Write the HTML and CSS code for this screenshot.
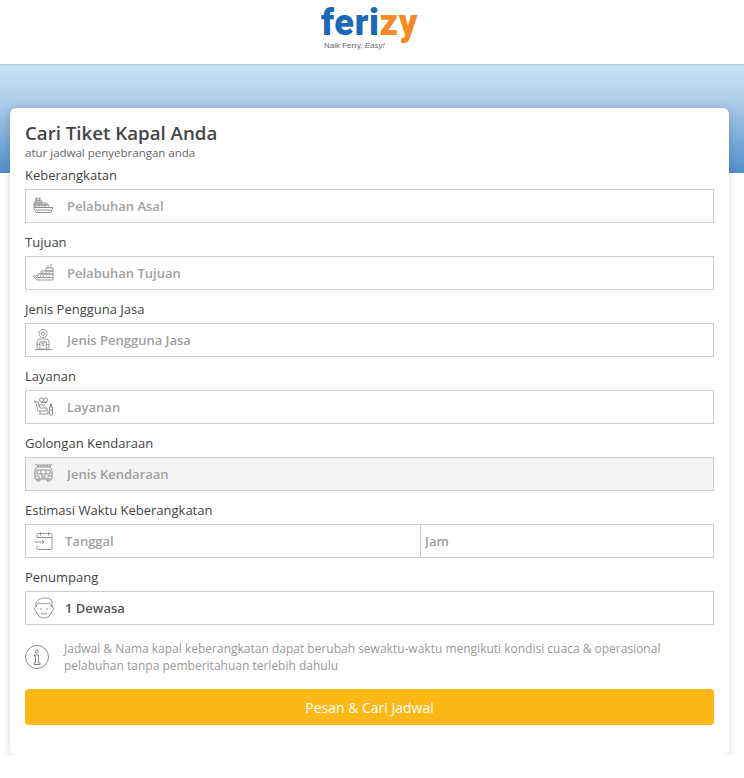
FILE: index.html
```html
<!DOCTYPE html>
<html>
  <head>
    <title>Ferizy - Cari Tiket Kapal</title>
    <link rel="stylesheet" href="styles.css">
  </head>
  <body>
    <header class="topbar">
      <div class="logo">
        <div class="logo-word"><span class="blue">feri</span><span class="orange">zy</span></div>
        <div class="logo-tag">Naik Ferry, <em>Easy!</em></div>
      </div>
    </header>
    <div class="hero"></div>

    <main class="card">
      <h1>Cari Tiket Kapal Anda</h1>
      <p class="sub">atur jadwal penyebrangan anda</p>

      <div class="field">
        <label>Keberangkatan</label>
        <div class="box">
          <svg class="icon" viewBox="0 0 22 22"><path d="M3 3h1v3H3zM6 3h1v3H6zM2 6h7v2H2zM1 8h13v2H1zM1 10h15v2.500H1zM0.500 12.500H20l-2.500 5H3zM3 15h15M3 9v1M6 9v1M9 9v1M12 9v1M3 11v1M6 11v1M9 11v1M12 11v1"/></svg>
          <input type="text" placeholder="Pelabuhan Asal">
        </div>
      </div>

      <div class="field">
        <label>Tujuan</label>
        <div class="box">
          <svg class="icon" viewBox="0 0 22 22"><path d="M15 3v3M18 2v4M13 6h7v3h-7zM8 9h12v3H8zM5 12h15v6H4l-4-4h5zM3 15.500h17M10 10v1M13 10v1M16 10v1M7 14h1M10 14h1M13 14h1M16 14h1"/></svg>
          <input type="text" placeholder="Pelabuhan Tujuan">
        </div>
      </div>

      <div class="field">
        <label>Jenis Pengguna Jasa</label>
        <div class="box">
          <svg class="icon" viewBox="0 0 22 24"><circle cx="10" cy="5" r="4.500"/><circle cx="10" cy="5" r="2"/><path d="M5 11h10l1.500 3v8h-13v-8zM6.500 14h7v8M6.500 14v8M9 14v4h2v-4M3.500 17h3M13.500 17h3M1 22.500h19"/></svg>
          <input type="text" placeholder="Jenis Pengguna Jasa">
        </div>
      </div>

      <div class="field">
        <label>Layanan</label>
        <div class="box">
          <svg class="icon" viewBox="0 0 22 22"><circle cx="8.500" cy="4" r="2"/><circle cx="12.500" cy="4" r="2"/><path d="M1 5l4 1 2 6h7v3H5l-2-8zM5 9h7M6 18h9v-3M7 15v3M16.500 11h3v8h-3zM17.500 11V8h1v3M17 14h2M8 6.500h6"/></svg>
          <input type="text" placeholder="Layanan">
        </div>
      </div>

      <div class="field">
        <label>Golongan Kendaraan</label>
        <div class="box disabled">
          <svg class="icon" viewBox="0 0 22 22"><path d="M4 4h13l2 3v9H2V7zM5 2v2M8 2v2M11 2v2M14 2v2M17 2v2M2 2h17M4 7h13v4H4zM8 7v4M13 7v4M1 10h1M19 10h1M2 13h4v3M19 13h-4v3M8 13h5M8 15h5M4 16v2h3v-2M14 16v2h3v-2"/></svg>
          <input type="text" placeholder="Jenis Kendaraan" disabled>
        </div>
      </div>

      <div class="field">
        <label>Estimasi Waktu Keberangkatan</label>
        <div class="box split">
          <div class="split-left">
            <svg class="icon small" viewBox="0 0 20 20"><path d="M3 7.500V3.500a1 1 0 0 1 1-1h13a1 1 0 0 1 1 1v14a1 1 0 0 1-1 1H4a1 1 0 0 1-1-1v-3M3 6.500h15M6.500 1v3.500M14.500 1v3.500M0.500 11h9.500M8 9l2 2-2 2"/></svg>
            <input type="text" placeholder="Tanggal">
          </div>
          <div class="split-right">
            <input type="text" placeholder="Jam">
          </div>
        </div>
      </div>

      <div class="field">
        <label>Penumpang</label>
        <div class="box">
          <svg class="icon face" viewBox="0 0 22 22"><path d="M3 10c-2 0-2 4 0 4 1 4 4 7 8 7s7-3 8-7c2 0 2-4 0-4"/><path d="M3 10V6c1-3 5-5 9-5 3 0 6 1 7 3v6c-1-2-2-4-3-4-3 1-7 1-10 0-2 0-2 2-3 4z"/><path d="M7 12h2M13 12h2M8 16c2 1.500 4 1.500 6 0"/></svg>
          <input class="filled" type="text" value="1 Dewasa">
        </div>
      </div>

      <div class="note">
        <svg class="note-icon" viewBox="0 0 24 24"><circle cx="12" cy="12" r="11.500"/><circle cx="12" cy="6.500" r="1.500"/><path d="M9.500 10h4v8H15v1.500H9V18h1.500v-6.500h-1z"/></svg>
        <p>Jadwal &amp; Nama kapal keberangkatan dapat berubah sewaktu-waktu mengikuti kondisi cuaca &amp; operasional pelabuhan tanpa pemberitahuan terlebih dahulu</p>
      </div>

      <button class="submit">Pesan &amp; Cari Jadwal</button>
    </main>
  </body>
</html>
```

FILE: styles.css
```css
* {
  box-sizing: border-box;
}

body {
  margin: 0;
  background: #fff;
  font-family: "Open Sans", sans-serif;
  font-size: 13px;
  color: #444;
}

.topbar {
  height: 64px;
  display: flex;
  justify-content: center;
  padding-top: 5px;
  background: #fff;
}

.logo {
  width: 100px;
  margin-left: -2px;
}

.logo-word {
  font-family: Roboto, sans-serif;
  font-size: 36px;
  font-weight: 900;
  line-height: 36px;
  letter-spacing: 0.7px;
  white-space: nowrap;
}

.blue {
  color: #1b69b4;
}

.orange {
  color: #f58a25;
}

.logo-tag {
  padding-left: 3px;
  font-family: "Liberation Sans", sans-serif;
  font-size: 8px;
  line-height: 10px;
  color: #666;
}

.hero {
  height: 109px;
  background: linear-gradient(#cbe4f5 0, #a6c8e6 40%, #4f8fcb 100%);
  box-shadow: inset 0 2px 2px -1px rgba(0, 0, 0, 0.12);
}

.card {
  width: 719px;
  margin: -65px 0 0 10px;
  padding: 14px 15px 30px;
  position: relative;
  background: #fff;
  border-radius: 6px;
  box-shadow: 0 1px 8px rgba(0, 0, 0, 0.16);
}

h1 {
  margin: 0;
  font-size: 18.7px;
  font-weight: 600;
  line-height: 22px;
  color: #444;
}

.sub {
  margin: 1px 0 5px;
  font-size: 11.5px;
  line-height: 16px;
  color: #666;
}

.field {
  margin-bottom: 10px;
}

label {
  display: block;
  margin-bottom: 5px;
  font-size: 13px;
  line-height: 18px;
  color: #444;
}

.box {
  height: 34px;
  display: flex;
  align-items: center;
  padding-left: 7px;
  background: #fff;
  border: 1px solid #ccc;
}

.box.disabled {
  background: #f4f4f4;
}

.icon {
  width: 22px;
  height: 22px;
  flex: none;
  margin-right: 12px;
  fill: none;
  stroke: #8a8a8a;
  stroke-width: 0.9;
}

.icon.small {
  width: 20px;
  height: 20px;
  margin-right: 11px;
}

.icon.face {
  margin-right: 10px;
}

input {
  flex: 1;
  min-width: 0;
  height: 100%;
  padding: 0;
  border: none;
  outline: none;
  background: transparent;
  font-family: "Open Sans", sans-serif;
  font-size: 13px;
  font-weight: 600;
}

input::placeholder {
  color: #a0a0a0;
  opacity: 1;
}

.filled {
  color: #555;
}

.box.split {
  padding-left: 0;
}

.split-left {
  width: 395px;
  height: 100%;
  display: flex;
  align-items: center;
  padding-left: 8px;
  border-right: 1px solid #ccc;
}

.split-right {
  flex: 1;
  height: 100%;
  display: flex;
  padding-left: 4px;
}

.note {
  display: flex;
  align-items: center;
  margin: 15px 0;
}

.note-icon {
  width: 24px;
  height: 24px;
  flex: none;
  margin-right: 15px;
  fill: none;
  stroke: #888;
  stroke-width: 1;
}

.note p {
  margin: 0;
  width: 620px;
  font-size: 12px;
  line-height: 17px;
  color: #999;
}

.submit {
  display: block;
  width: 100%;
  height: 36px;
  border: none;
  border-radius: 4px;
  background: #fbb817;
  color: #fff;
  font-family: "Open Sans", sans-serif;
  font-size: 14px;
  font-weight: 400;
}
```
